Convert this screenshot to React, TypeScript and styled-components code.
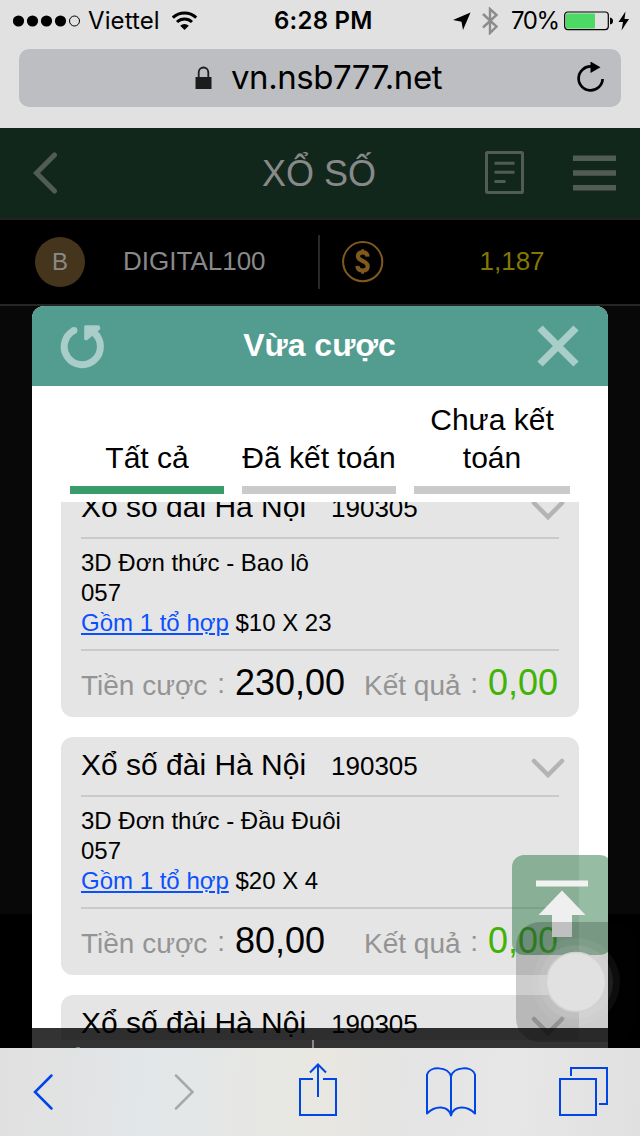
import React from "react";
import styled, { createGlobalStyle } from "styled-components";

const GlobalStyle = createGlobalStyle`
  * { box-sizing: border-box; }
  body {
    margin: 0;
    background: #000;
    font-family: "Liberation Sans", Arial, sans-serif;
    color: #000;
  }
  svg { display: block; flex: none; }
`;

const Screen = styled.div`
  position: relative;
  width: 640px;
  height: 1136px;
  overflow: hidden;
  display: flex;
  flex-direction: column;
`;

const BrowserTop = styled.header`
  height: 128px;
  background: #e1e1e1;
  font-family: Inter, sans-serif;
  padding: 0 0 0 13px;
`;

const StatusBar = styled.div`
  height: 41px;
  margin-bottom: 8px;
  display: flex;
  align-items: center;
`;

const Label = styled.span<{ $w: number; $size: number; $weight?: number; $track?: number; $ml?: number }>`
  flex: none;
  width: ${(p) => p.$w}px;
  margin-left: ${(p) => p.$ml ?? 0}px;
  font-size: ${(p) => p.$size}px;
  font-weight: ${(p) => p.$weight ?? 400};
  letter-spacing: ${(p) => p.$track ?? 0}px;
  line-height: 41px;
  white-space: nowrap;
`;

const StatusIcon = styled.span<{ $ml: number }>`
  flex: none;
  margin-left: ${(p) => p.$ml}px;
`;

const AddressBar = styled.div`
  width: 602px;
  height: 58px;
  margin-left: 6px;
  padding: 0 15px 0 176px;
  border-radius: 10px;
  background: #bdbec2;
  display: flex;
  align-items: center;
`;

const Host = styled.span`
  width: 230px;
  margin-left: 19px;
  padding-bottom: 2px;
  font-size: 33px;
  letter-spacing: -0.45px;
  line-height: 40px;
  white-space: nowrap;
`;

const Spacer = styled.div`
  flex: 1;
`;

const TitleBar = styled.div`
  height: 92px;
  background: #12271c;
  border-bottom: 2px solid #202521;
  padding: 0 24px 1px 33px;
  display: flex;
  align-items: center;
`;

const PageTitle = styled.h1`
  margin: 0 0 0 204px;
  padding-top: 2px;
  width: 223px;
  font-size: 36px;
  line-height: 88px;
  font-weight: 400;
  color: #898989;
`;

const AccountBar = styled.div`
  height: 86px;
  background: #000;
  border-bottom: 2px solid #252525;
  padding-left: 35px;
  display: flex;
  align-items: center;
  font-size: 26px;
  color: #898989;
`;

const Avatar = styled.span`
  width: 50px;
  height: 50px;
  border-radius: 50%;
  background: #46351d;
  font-size: 24px;
  line-height: 50px;
  text-align: center;
`;

const UserName = styled.span`
  width: 195px;
  margin-left: 38px;
  padding-bottom: 2px;
`;

const BarDivider = styled.span`
  width: 2px;
  height: 54px;
  background: #292929;
  margin-right: 22px;
`;

const Balance = styled.span`
  margin-left: 95.5px;
  padding-bottom: 2px;
  color: #857800;
`;

const Backdrop = styled.div`
  height: 742px;
  background: linear-gradient(#080808 608px, #000 608px);
  padding: 0 32px;
`;

const Dialog = styled.section`
  position: relative;
  height: 742px;
  border-radius: 12px 12px 0 0;
  overflow: hidden;
  background: #fff;
`;

const DialogHeader = styled.div`
  height: 80px;
  background: #539c90;
  display: flex;
  align-items: center;
  justify-content: space-between;
  padding: 0 29px 0 28px;
`;

const DialogTitle = styled.h2`
  margin: 0 4px 0 0;
  padding-bottom: 2px;
  font-size: 32px;
  line-height: 78px;
  color: #fff;
`;

const Tabs = styled.nav`
  height: 116px;
  padding: 0 38px 8px;
  display: grid;
  grid-template-columns: 154px 154px 156px;
  column-gap: 18px;
  align-items: end;
`;

const Tab = styled.div<{ $active?: boolean }>`
  padding-bottom: 9px;
  border-bottom: 8px solid ${(p) => (p.$active ? "#3a9c6a" : "#cacaca")};
  text-align: center;
  font-size: 30px;
  line-height: 38px;
`;

const BetList = styled.div`
  height: 538px;
  overflow: hidden;
  padding: 0 29px;
`;

const BetScroll = styled.div`
  margin-top: -23px;
  display: flex;
  flex-direction: column;
  gap: 20px;
`;

const Card = styled.article`
  flex: none;
  height: 238px;
  padding: 0 20px;
  border-radius: 12px;
  background: #e5e5e5;
`;

const CardHead = styled.div`
  height: 60px;
  border-bottom: 2px solid #cacaca;
  display: flex;
  align-items: center;
`;

const GameName = styled.span`
  width: 250px;
  font-size: 30px;
  line-height: 56px;
  white-space: nowrap;
  padding-bottom: 2px;
`;

const DrawNo = styled.span`
  font-size: 26px;
  flex: 1;
`;

const Expand = styled.span`
  margin: 3px -6px 0 0;
`;

const CardBody = styled.div`
  height: 112px;
  padding-top: 9px;
  border-bottom: 2px solid #cacaca;
  font-size: 24px;
  line-height: 30px;
`;

const ComboLink = styled.a`
  color: #0a50ff;
  text-decoration: underline;
  text-decoration-thickness: 2px;
  text-underline-offset: 2px;
`;

const CardFoot = styled.div`
  height: 66px;
  display: flex;
  align-items: baseline;
  padding-top: 11px;
  line-height: 42px;
  white-space: nowrap;
`;

const FootLabel = styled.span<{ $w: number }>`
  width: ${(p) => p.$w}px;
  font-size: 28px;
  color: #949494;
  display: flex;
  justify-content: space-between;
`;

const Colon = styled.span`
  line-height: 38px;
`;

const Amount = styled.span<{ $w?: number; $win?: boolean }>`
  width: ${(p) => (p.$w ? p.$w + "px" : "auto")};
  margin-left: 10px;
  font-size: 36px;
  color: ${(p) => (p.$win ? "#41b304" : "#000")};
`;

const FooterShade = styled.div`
  position: absolute;
  left: 0;
  right: 0;
  bottom: 0;
  height: 20px;
  background: rgba(0, 0, 0, 0.8);
`;

const TopButton = styled.button`
  position: absolute;
  left: 480px;
  top: 549px;
  width: 100px;
  height: 100px;
  padding: 0;
  border: 0;
  border-radius: 12px;
  background: rgba(45, 124, 71, 0.5);
`;

const AssistiveTouch = styled.div`
  position: absolute;
  left: 516px;
  top: 922px;
`;

const BrowserBottom = styled.footer`
  height: 88px;
  background: linear-gradient(93deg, #e0e0e0 0%, #e2e3e4 14%, #e2e7e9 23%, #e6e7e5 38%, #e8e7e1 50%, #e4e4e4 63%, #e7e7e7 80%, #e0e0e0 100%);
  display: flex;
  align-items: center;
`;

const ToolSlot = styled.span<{ $ml: number }>`
  margin-left: ${(p) => p.$ml}px;
`;

const bets = [
  { kind: "3D Đơn thức - Bao lô", calc: "$10 X 23", stake: "230,00" },
  { kind: "3D Đơn thức - Đầu Đuôi", calc: "$20 X 4", stake: "80,00" },
];

function BetCardHead() {
  return (
    <CardHead>
      <GameName>Xổ số đài Hà Nội</GameName>
      <DrawNo>190305</DrawNo>
      <Expand>
        <svg width="34" height="22" viewBox="0 0 34 22">
          <path d="M3 4 L17 18 L31 4" fill="none" stroke="#b4b4b4" strokeWidth="4.5" strokeLinecap="round" />
        </svg>
      </Expand>
    </CardHead>
  );
}

function BetCard({ kind, calc, stake }: { kind: string; calc: string; stake: string }) {
  return (
    <Card>
      <BetCardHead />
      <CardBody>
        <div>{kind}</div>
        <div>057</div>
        <div>
          <ComboLink>Gồm 1 tổ hợp</ComboLink> {calc}
        </div>
      </CardBody>
      <CardFoot>
        <FootLabel $w={144}>
          Tiền cược <Colon>:</Colon>
        </FootLabel>
        <Amount $w={129}>{stake}</Amount>
        <FootLabel $w={114}>
          Kết quả <Colon>:</Colon>
        </FootLabel>
        <Amount $win>0,00</Amount>
      </CardFoot>
    </Card>
  );
}

export default function App() {
  return (
    <Screen>
      <GlobalStyle />
      <BrowserTop>
        <StatusBar>
          <svg width="68" height="12" viewBox="0 0 68 12">
            {[5.5, 19.5, 33.5, 47.5].map((x) => (
              <circle key={x} cx={x} cy="6" r="5.6" />
            ))}
            <circle cx="61.5" cy="6" r="5" fill="none" stroke="#000" />
          </svg>
          <Label $w={72} $ml={7} $size={24} $track={0.1}>Viettel</Label>
          <StatusIcon $ml={12}>
            <svg width="26" height="20" viewBox="0 0 26 20">
              <path d="M0.8 6.6 A17 17 0 0 1 24.2 6.6" fill="none" stroke="#000" strokeWidth="3" />
              <path d="M5 11 A10.8 10.8 0 0 1 20 11" fill="none" stroke="#000" strokeWidth="3" />
              <path d="M8.2 14.8 A6 6 0 0 1 16.8 14.8 L12.5 19 Z" />
            </svg>
          </StatusIcon>
          <Label $w={100} $ml={76} $size={24} $weight={600} $track={0.25}>6:28 PM</Label>
          <StatusIcon $ml={78}>
            <svg width="20" height="20" viewBox="0 0 20 20">
              <path d="M18.5 1.5 L11 19 L9.5 10.8 L1 9 Z" />
            </svg>
          </StatusIcon>
          <StatusIcon $ml={10}>
            <svg width="16" height="28" viewBox="0 0 16 28">
              <path d="M1 7 L14.5 19.5 L8 26 V2 L14.5 8 L1 20.5" fill="none" stroke="#8c8c8c" strokeWidth="2.4" />
            </svg>
          </StatusIcon>
          <Label $w={53} $ml={13} $size={24} $track={-1.4}>70%</Label>
          <svg width="50" height="20" viewBox="0 0 50 20">
            <rect x="0.7" y="1" width="43.6" height="17.6" rx="3" fill="none" stroke="#000" strokeWidth="1.2" />
            <rect x="2" y="2.6" width="29" height="14.8" rx="1" fill="#4cd964" />
            <path d="M46 6.5 Q49 7 49 10 Q49 13 46 13.5 Z" />
          </svg>
          <StatusIcon $ml={4}>
            <svg width="12" height="20" viewBox="0 0 12 20">
              <path d="M7.5 0.5 L0.5 11 H5 L3.5 19.5 L11 8 H6.5 Z" />
            </svg>
          </StatusIcon>
        </StatusBar>
        <AddressBar>
          <svg width="17" height="24" viewBox="0 0 17 24">
            <rect x="0.5" y="11" width="16" height="12" fill="#1c1c1c" />
            <path d="M3.7 11 V6.5 a4.8 5 0 0 1 9.6 0 V11" fill="none" stroke="#1c1c1c" strokeWidth="1.8" />
          </svg>
          <Host>vn.nsb777.net</Host>
          <Spacer />
          <svg width="30" height="32" viewBox="0 0 30 32">
            <path d="M15.5 4.5 A12 12 0 1 0 26.6 17" fill="none" stroke="#000" strokeWidth="2.7" />
            <path d="M14.5 -0.5 L24.5 5.3 L14.5 11 Z" />
          </svg>
        </AddressBar>
      </BrowserTop>

      <TitleBar>
        <svg width="25" height="42" viewBox="0 0 25 42">
          <path d="M21.5 3 L3.5 21 L21.5 39" fill="none" stroke="#505c55" strokeWidth="5" strokeLinecap="round" />
        </svg>
        <PageTitle>XỔ SỐ</PageTitle>
        <svg width="39" height="43" viewBox="0 0 39 43">
          <rect x="1.5" y="1.5" width="36" height="40" rx="1" fill="none" stroke="#505c55" strokeWidth="3" />
          <path d="M9.5 12.3 H29.5 M9.5 21.3 H29.5 M9.5 30.5 H20.5" stroke="#505c55" strokeWidth="3" />
        </svg>
        <Spacer />
        <svg width="43" height="36" viewBox="0 0 43 36">
          <path d="M0 3.3 H43 M0 18 H43 M0 32.7 H43" stroke="#505c55" strokeWidth="5.4" />
        </svg>
      </TitleBar>

      <AccountBar>
        <Avatar>B</Avatar>
        <UserName>DIGITAL100</UserName>
        <BarDivider />
        <svg width="42" height="42" viewBox="0 0 42 42">
          <circle cx="20.7" cy="20.7" r="19.6" fill="none" stroke="#80591c" strokeWidth="2" />
          <path d="M25.6 15.6 C25.3 12.4 23.5 11.4 20.7 11.4 C17.5 11.4 15.9 13 15.9 15.3 C15.9 20.8 25.7 19.2 25.7 25.2 C25.7 28 23.8 29.5 20.7 29.5 C17.3 29.5 15.6 28 15.4 24.8" fill="none" stroke="#80591c" strokeWidth="4.2" />
          <path d="M20.7 8.3 V12 M20.7 29 V32.8" stroke="#80591c" strokeWidth="2.8" />
        </svg>
        <Balance>1,187</Balance>
      </AccountBar>

      <Backdrop>
        <Dialog>
          <DialogHeader>
            <svg width="46" height="46" viewBox="0 0 46 46">
              <path d="M13.6 7.7 A18.1 18.1 0 1 0 34.5 10.2" fill="none" stroke="#a9cdc8" strokeWidth="7" />
              <circle cx="14" cy="7.5" r="3.4" fill="#a9cdc8" />
              <path d="M25.5 3.5 H38.5 L39 5.5 L26.5 16 L25.5 16 Z" fill="#a9cdc8" stroke="#a9cdc8" strokeWidth="2.6" strokeLinejoin="round" />
            </svg>
            <DialogTitle>Vừa cược</DialogTitle>
            <svg width="42" height="42" viewBox="0 0 42 42">
              <path d="M3 3 L39 39 M39 3 L3 39" stroke="#a9cdc8" strokeWidth="7.4" />
            </svg>
          </DialogHeader>
          <Tabs>
            <Tab $active>Tất cả</Tab>
            <Tab>Đã kết toán</Tab>
            <Tab>Chưa kết toán</Tab>
          </Tabs>
          <BetList>
            <BetScroll>
              {bets.map((b) => (
                <BetCard key={b.kind} {...b} />
              ))}
              <Card>
                <BetCardHead />
              </Card>
            </BetScroll>
          </BetList>
          <FooterShade>
            <svg width="576" height="20" viewBox="0 0 576 20">
              <rect x="280" y="12" width="2" height="8" fill="#8a8a8a" />
              <rect x="44" y="19" width="4" height="1" fill="#777" />
            </svg>
          </FooterShade>
          <TopButton>
            <svg width="100" height="100" viewBox="0 0 100 100">
              <rect x="24" y="25.5" width="52" height="6" fill="#f2f2f2" />
              <path d="M50 35.5 L73.5 60 H60 V82 H40 V60 H26.5 Z" fill="#efefef" />
            </svg>
          </TopButton>
        </Dialog>
      </Backdrop>

      <AssistiveTouch>
        <svg width="120" height="120" viewBox="0 0 120 120">
          <rect width="120" height="120" rx="24" fill="#060606" fillOpacity="0.2" />
          <circle cx="60" cy="60" r="44" fill="#fff" fillOpacity="0.05" />
          <circle cx="60" cy="60" r="37" fill="#fff" fillOpacity="0.08" />
          <circle cx="60" cy="60" r="29.5" fill="#e1e1e1" stroke="#d2d2d2" strokeWidth="1.5" />
        </svg>
      </AssistiveTouch>

      <BrowserBottom>
        <ToolSlot $ml={33}>
          <svg width="21" height="38" viewBox="0 0 21 38">
            <path d="M18.5 2.5 L2 19 L18.5 35.5" fill="none" stroke="#0045e6" strokeWidth="2.5" strokeLinecap="round" />
          </svg>
        </ToolSlot>
        <ToolSlot $ml={119}>
          <svg width="22" height="38" viewBox="0 0 22 38">
            <path d="M3 2.5 L19.5 19 L3 35.5" fill="none" stroke="#a8a8a8" strokeWidth="2.5" strokeLinecap="round" />
          </svg>
        </ToolSlot>
        <ToolSlot $ml={104}>
          <svg width="38" height="58" viewBox="0 0 38 58">
            <path d="M14 16 H1 V52 H37 V16 H24 M19 34 V2 M11 9.5 L19 1.5 L27 9.5" fill="none" stroke="#0045e6" strokeWidth="2" />
          </svg>
        </ToolSlot>
        <ToolSlot $ml={89}>
          <svg width="50" height="50" viewBox="0 0 50 50">
            <path d="M25 48.5 V9.5 C22 -1 4 -1 1 7.5 V46.5 C9 38.5 22 38 25 48.5 C28 38 41 38.5 49 46.5 V7.5 C46 -1 28 -1 25 9.5" fill="none" stroke="#0045e6" strokeWidth="2" strokeLinejoin="round" />
          </svg>
        </ToolSlot>
        <ToolSlot $ml={83}>
          <svg width="49" height="50" viewBox="0 0 49 50">
            <path d="M1 12 H37 V48 H1 Z M12 9 V1 H48 V37 H40" fill="none" stroke="#0045e6" strokeWidth="2" />
          </svg>
        </ToolSlot>
      </BrowserBottom>
    </Screen>
  );
}
